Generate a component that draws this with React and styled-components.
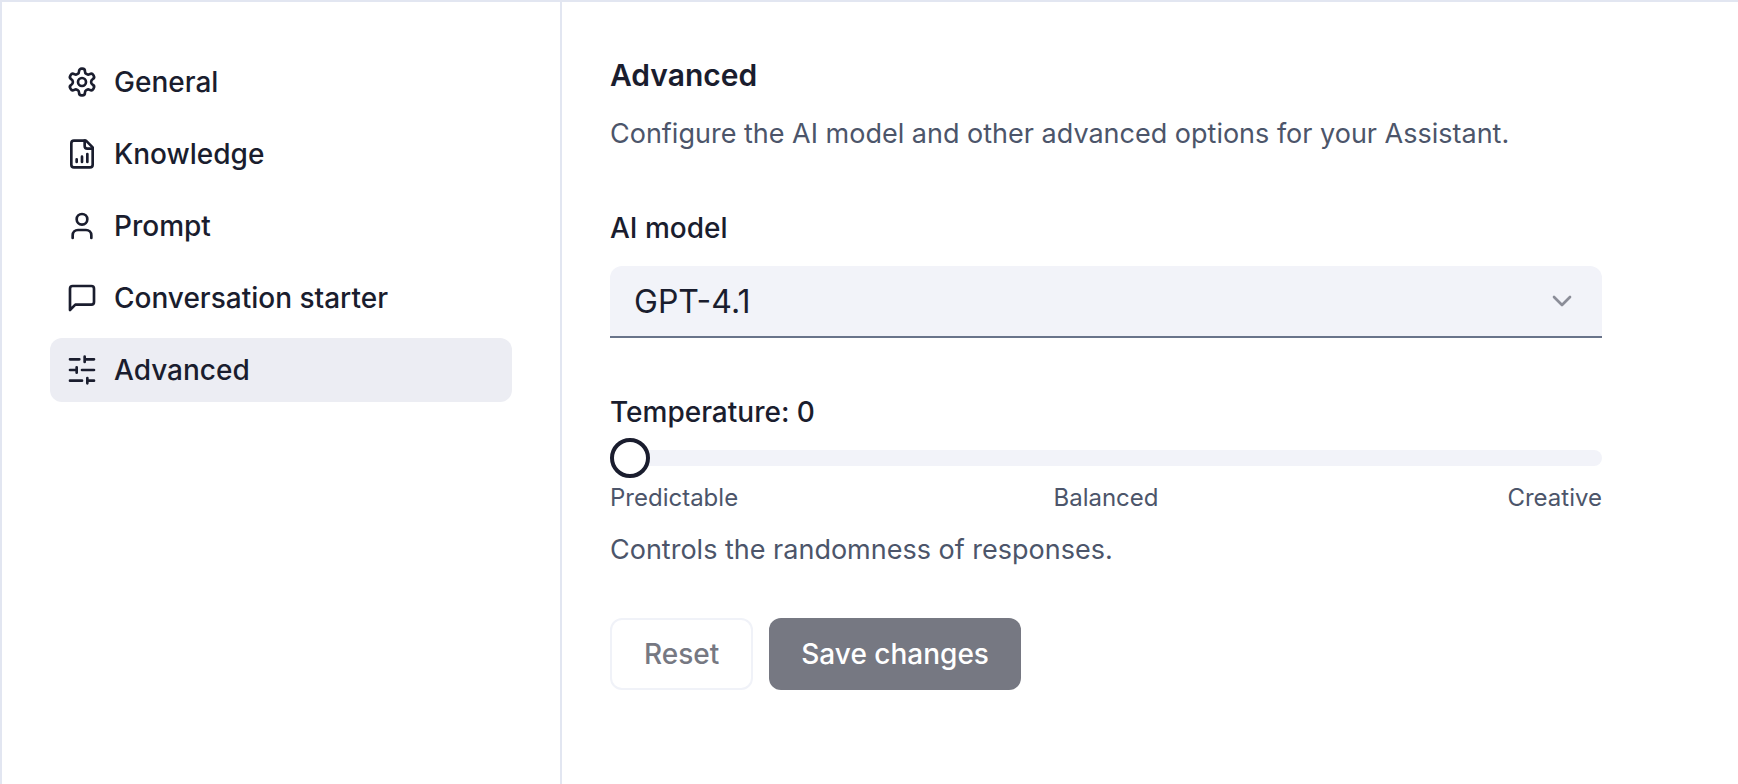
import React, { useState } from 'react';
import styled, { createGlobalStyle } from 'styled-components';
import { ChevronDown } from 'lucide-react';

const SettingsIcon = () => (
  <Icon viewBox="0 0 24 24">
    <path d="M12.22 2h-.44a2 2 0 0 0-2 2v.18a2 2 0 0 1-1 1.73l-.43.25a2 2 0 0 1-2 0l-.15-.08a2 2 0 0 0-2.73.73l-.22.38a2 2 0 0 0 .73 2.73l.15.1a2 2 0 0 1 1 1.72v.51a2 2 0 0 1-1 1.74l-.15.09a2 2 0 0 0-.73 2.73l.22.38a2 2 0 0 0 2.73.73l.15-.08a2 2 0 0 1 2 0l.43.25a2 2 0 0 1 1 1.73V20a2 2 0 0 0 2 2h.44a2 2 0 0 0 2-2v-.18a2 2 0 0 1 1-1.73l.43-.25a2 2 0 0 1 2 0l.15.08a2 2 0 0 0 2.73-.73l.22-.39a2 2 0 0 0-.73-2.73l-.15-.08a2 2 0 0 1-1-1.74v-.5a2 2 0 0 1 1-1.74l.15-.09a2 2 0 0 0 .73-2.73l-.22-.38a2 2 0 0 0-2.73-.73l-.15.08a2 2 0 0 1-2 0l-.43-.25a2 2 0 0 1-1-1.73V4a2 2 0 0 0-2-2z" />
    <circle cx="12" cy="12" r="3" />
  </Icon>
);

const FileIcon = () => (
  <Icon viewBox="0 0 24 24">
    <path d="M15 2H6a2 2 0 0 0-2 2v16a2 2 0 0 0 2 2h12a2 2 0 0 0 2-2V7Z" />
    <path d="M14 2v4a2 2 0 0 0 2 2h4" />
    <path d="M8 18v-2M12 18v-4M16 18v-6" />
  </Icon>
);

const UserIcon = () => (
  <Icon viewBox="0 0 24 24">
    <path d="M19 21v-2a4 4 0 0 0-4-4H9a4 4 0 0 0-4 4v2" />
    <circle cx="12" cy="7" r="4" />
  </Icon>
);

const MessageIcon = () => (
  <Icon viewBox="0 0 24 24">
    <path d="M21 15a2 2 0 0 1-2 2H7l-4 4V5a2 2 0 0 1 2-2h14a2 2 0 0 1 2 2z" />
  </Icon>
);

const SlidersIcon = () => (
  <Icon viewBox="0 0 24 24">
    <path d="M21 4h-7M10 4H3M21 12h-9M8 12H3M21 20h-5M12 20H3M14 2v4M8 10v4M16 18v4" />
  </Icon>
);

const menus = [
  { name: 'General', icon: SettingsIcon },
  { name: 'Knowledge', icon: FileIcon },
  { name: 'Prompt', icon: UserIcon },
  { name: 'Conversation starter', icon: MessageIcon },
  { name: 'Advanced', icon: SlidersIcon },
];

const App = () => {
  const [temperature, setTemperature] = useState(0);

  return (
    <>
      <GlobalStyle />
      <Wrap>
        <Sidebar>
          {menus.map(({ name, icon: MenuIcon }) => (
            <MenuLink key={name} href="#" $active={name === 'Advanced'}>
              <MenuIcon />
              {name}
            </MenuLink>
          ))}
        </Sidebar>
        <Content>
          <Form onSubmit={(e) => e.preventDefault()}>
            <Title>Advanced</Title>
            <Text>
              Configure the AI model and other advanced options for your
              Assistant.
            </Text>

            <Field>
              <Label htmlFor="model">AI model</Label>
              <SelectBox>
                <Select id="model" defaultValue="GPT-4.1">
                  <option>GPT-4.1</option>
                </Select>
                <Chevron />
              </SelectBox>
            </Field>

            <Field>
              <Label htmlFor="temperature">Temperature: {temperature}</Label>
              <Slider
                id="temperature"
                type="range"
                min="0"
                max="1"
                step="0.1"
                value={temperature}
                onChange={(e) => setTemperature(Number(e.target.value))}
              />
              <Marks>
                <Mark $align="left">Predictable</Mark>
                <Mark $align="center">Balanced</Mark>
                <Mark $align="right">Creative</Mark>
              </Marks>
              <Text>Controls the randomness of responses.</Text>
            </Field>

            <Buttons>
              <Button type="reset">Reset</Button>
              <Button type="submit" $primary>
                Save changes
              </Button>
            </Buttons>
          </Form>
        </Content>
      </Wrap>
    </>
  );
};

const GlobalStyle = createGlobalStyle`
  * {
    box-sizing: border-box;
  }

  body {
    margin: 0;
    background-color: #fff;
    color: #1a1d2e;
    font-family: Inter, 'Liberation Sans', sans-serif;
    font-size: 28px;
  }
`;

const Wrap = styled.div`
  display: flex;
  min-height: 100vh;
  border: solid #e2e6f1;
  border-width: 2px 0 0 2px;
`;

const Sidebar = styled.nav`
  display: flex;
  flex-direction: column;
  flex: none;
  gap: 8px;
  width: 560px;
  padding: 48px;
  border-right: 2px solid #e2e6f1;
`;

const MenuLink = styled.a`
  display: flex;
  align-items: center;
  gap: 16px;
  height: 64px;
  padding: 0 16px;
  border-radius: 12px;
  background-color: ${(props) => (props.$active ? '#ecedf3' : 'transparent')};
  color: inherit;
  font-weight: 500;
  text-decoration: none;
`;

const Icon = styled.svg`
  flex: none;
  width: 32px;
  height: 32px;
  fill: none;
  stroke: currentColor;
  stroke-width: 2;
  stroke-linecap: round;
  stroke-linejoin: round;
`;

const Content = styled.main`
  flex: 1;
  min-width: 0;
  padding: 48px;
`;

const Form = styled.form`
  max-width: 992px;
`;

const Title = styled.h1`
  margin: 0 0 14px;
  font-size: 30px;
  font-weight: 600;
  line-height: 50px;
`;

const Text = styled.p`
  margin: 0;
  color: #4c556a;
  font-size: 27px;
  line-height: 40px;
`;

const Field = styled.div`
  display: flex;
  flex-direction: column;
  margin-top: 60px;
`;

const Label = styled.label`
  font-weight: 500;
  line-height: 28px;
`;

const SelectBox = styled.div`
  position: relative;
  margin-top: 24px;
`;

const Select = styled.select`
  appearance: none;
  display: block;
  width: 100%;
  height: 72px;
  padding: 0 24px;
  border: 0;
  border-bottom: 2px solid #69748a;
  border-radius: 12px 12px 0 0;
  background-color: #f2f3f9;
  color: inherit;
  font-family: inherit;
  font-size: 32px;
`;

const Chevron = styled(ChevronDown)`
  position: absolute;
  top: 19px;
  right: 24px;
  width: 32px;
  height: 32px;
  color: #8b8d98;
  pointer-events: none;
`;

const Slider = styled.input`
  appearance: none;
  width: 100%;
  height: 40px;
  margin: 12px 0 4px;
  background: transparent;

  &::-webkit-slider-runnable-track {
    height: 16px;
    border-radius: 8px;
    background-color: #f2f3f9;
  }

  &::-webkit-slider-thumb {
    appearance: none;
    width: 40px;
    height: 40px;
    margin-top: -12px;
    border: 4px solid #1a1d2e;
    border-radius: 50%;
    background-color: #fff;
  }
`;

const Marks = styled.div`
  display: grid;
  grid-template-columns: repeat(3, 1fr);
  margin-bottom: 16px;
  color: #4c556a;
  font-size: 24px;
  line-height: 32px;
`;

const Mark = styled.span`
  text-align: ${(props) => props.$align};
`;

const Buttons = styled.div`
  display: flex;
  gap: 16px;
  margin-top: 48px;
`;

const Button = styled.button`
  height: 72px;
  padding: 0 32px;
  border: ${(props) => (props.$primary ? '0' : '2px solid #f0f2f8')};
  border-radius: 12px;
  background-color: ${(props) => (props.$primary ? '#767882' : '#fff')};
  color: ${(props) => (props.$primary ? '#fff' : '#767882')};
  font-family: inherit;
  font-size: 28px;
  font-weight: 500;
`;

export default App;
